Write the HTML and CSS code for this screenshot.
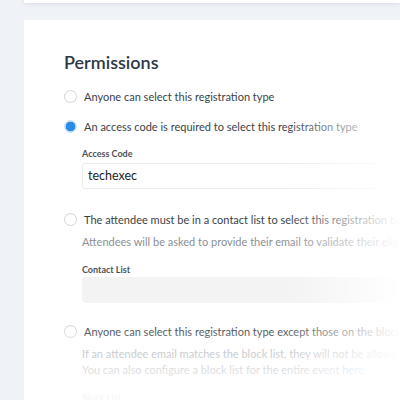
FILE: index.html
```html
<!DOCTYPE html>
<html>
<head>
<meta charset="utf-8">
<link rel="stylesheet" href="styles.css">
</head>
<body>
<div class="page">
  <div class="topcard"></div>
  <div class="card">
    <h2 class="title">Permissions</h2>
    <div class="option">
      <span class="radio"></span>
      <span class="label">Anyone can select this registration type</span>
    </div>
    <div class="option">
      <span class="radio checked"></span>
      <span class="label">An access code is required to select this registration type</span>
    </div>
    <div class="field">
      <div class="flabel">Access Code</div>
      <div class="input">techexec</div>
    </div>
    <div class="option">
      <span class="radio"></span>
      <span class="label">The attendee must be in a contact list to select this registration type</span>
    </div>
    <div class="desc">Attendees will be asked to provide their email to validate their eligibility.</div>
    <div class="field tight">
      <div class="flabel">Contact List</div>
      <div class="input filled"></div>
    </div>
    <div class="option">
      <span class="radio"></span>
      <span class="label">Anyone can select this registration type except those on the block list</span>
    </div>
    <div class="desc">If an attendee email matches the block list, they will not be allowed to register.<br>You can also configure a block list for the entire event <a class="link">here</a>.</div>
    <div class="field">
      <div class="flabel">Block List</div>
      <div class="input filled"></div>
    </div>
  </div>
  <div class="fade"></div>
</div>
</body>
</html>
```
FILE: styles.css
```css
html, body { margin: 0; padding: 0; }
body {
  width: 400px; height: 400px; overflow: hidden;
  background: #eff2f7;
  font-family: Lato, "Open Sans", sans-serif;
}
.page { position: relative; width: 400px; height: 400px; overflow: hidden; padding-left: 24px; box-sizing: border-box; }
.topcard {
  height: 3px; margin-top: -10px; padding-top: 10px;
  background: #fff;
  box-shadow: 0 1px 4px rgba(40,50,80,0.10);
}
.card {
  margin-top: 17px;
  width: 420px;
  background: #fff;
  padding: 30px 0 0 40px;
  box-sizing: border-box;
  height: 420px;
}
.title {
  margin: 0 0 14px 0;
  font-size: 18px; font-weight: 600;
  color: #2e3845;
  line-height: 24px;
}
.option { display: flex; align-items: center; gap: 7px; height: 16px; margin-bottom: 14px; white-space: nowrap; }
.radio {
  width: 11px; height: 11px; border-radius: 50%;
  border: 1px solid #cfd3d8; background: #fff; flex: none;
  box-sizing: content-box;
}
.radio.checked {
  border-color: #c9dff5;
  background: radial-gradient(circle, #2b8be6 0 4.6px, #d9e8f7 5.2px);
}
.label { font-size: 11px; color: #3a3f47; }
.field { margin-left: 18px; margin-bottom: 22px; }
.field.tight { margin-bottom: 20px; }
.tight .flabel { margin-bottom: 1px; }
.flabel { font-size: 9px; font-weight: 700; color: #4c5158; line-height: 12px; margin-bottom: 3px; }
.input {
  height: 26px; box-sizing: border-box;
  border: 1px solid #ececec; border-radius: 3px;
  padding-left: 5px; font-size: 12.5px; color: #222; line-height: 24px;
}
.input.filled { background: #f3f3f3; border-color: #f3f3f3; }
.desc { margin: -7px 0 14px 18px; font-size: 11px; color: #8a8f95; line-height: 16px; white-space: nowrap; }
.last { color: #a9adb2; }
.link { color: #2b8be6; }
.fade {
  position: absolute; left: 24px; top: 20px; width: 376px; height: 380px; pointer-events: none;
  background:
    linear-gradient(to right, rgba(255,255,255,0) 261px, rgba(255,255,255,1) 376px),
    linear-gradient(to bottom, rgba(255,255,255,0) 305px, rgba(255,255,255,0.5) 330px, rgba(255,255,255,0.95) 375px);
}
```
